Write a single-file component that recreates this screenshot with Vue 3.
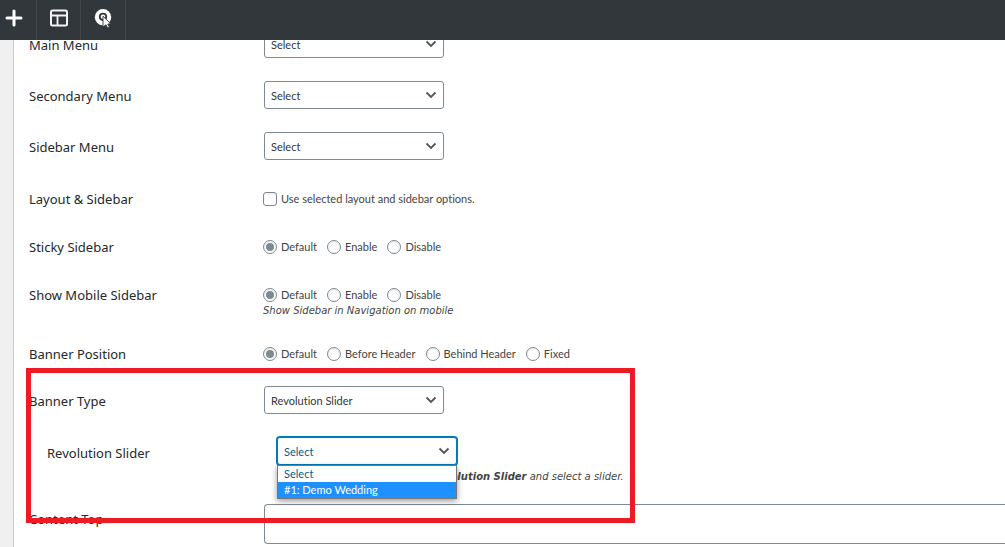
<script setup>
import { ref } from 'vue'

const menus = [
  { id: 'main-menu', label: 'Main Menu' },
  { id: 'secondary-menu', label: 'Secondary Menu' },
  { id: 'sidebar-menu', label: 'Sidebar Menu' },
]
const groups = [
  { id: 'sticky-sidebar', label: 'Sticky Sidebar', options: ['Default', 'Enable', 'Disable'] },
  {
    id: 'mobile-sidebar',
    label: 'Show Mobile Sidebar',
    options: ['Default', 'Enable', 'Disable'],
    hint: 'Show Sidebar in Navigation on mobile',
  },
  {
    id: 'banner-position',
    label: 'Banner Position',
    options: ['Default', 'Before Header', 'Behind Header', 'Fixed'],
  },
]
const chosen = ref({
  'sticky-sidebar': 'Default',
  'mobile-sidebar': 'Default',
  'banner-position': 'Default',
})
const useLayout = ref(false)
const contentTop = ref('')
</script>

<template>
  <div class="page">
    <header class="toolbar">
      <button type="button" class="tool first" aria-label="Add">
        <svg width="18" height="18" viewBox="0 0 18 18"><path d="M9 2v14M2 9h14" stroke="#fff" stroke-width="3" stroke-linecap="round" /></svg>
      </button>
      <button type="button" class="tool" aria-label="Layout">
        <svg width="18" height="18" viewBox="0 0 18 18" fill="none" stroke="#f4f4f4" stroke-width="2"><rect x="1" y="1.5" width="16" height="15" rx="1.5" /><path d="M1 6.5h16M7.5 6.5v10" stroke-width="1.8" /></svg>
      </button>
      <button type="button" class="tool last" aria-label="Select target">
        <svg width="20" height="20" viewBox="0 0 20 20"><circle cx="10" cy="9.2" r="8.2" fill="#fff" /><circle cx="10" cy="8.8" r="3.2" fill="#fff" stroke="#32373c" stroke-width="1.8" /><path d="M10 8.2l7.8 7.6-3 .2 1.7 3.2-1.9.8-1.7-3.3-2.9 2.3z" fill="#fff" stroke="#32373c" stroke-width="0.9" /></svg>
      </button>
    </header>

    <main class="panel">
      <div v-for="menu in menus" :key="menu.id" class="row">
        <label class="name" :for="menu.id">{{ menu.label }}</label>
        <div class="field">
          <div class="picker">
            <select :id="menu.id"><option>Select</option></select>
            <svg class="chevron" width="12" height="8" viewBox="0 0 12 8"><path d="M1.5 1.5L6 6l4.5-4.5" /></svg>
          </div>
        </div>
      </div>

      <div class="row options">
        <span class="name">Layout &amp; Sidebar</span>
        <div class="field choices">
          <label class="choice"><input v-model="useLayout" type="checkbox" />Use selected layout and sidebar options.</label>
        </div>
      </div>

      <div v-for="group in groups" :key="group.id" class="row options" role="radiogroup" :aria-labelledby="group.id">
        <span :id="group.id" class="name">{{ group.label }}</span>
        <div class="field">
          <div class="choices">
            <label v-for="option in group.options" :key="option" class="choice">
              <input v-model="chosen[group.id]" type="radio" :name="group.id" :value="option" />{{ option }}
            </label>
          </div>
          <p v-if="group.hint" class="hint">{{ group.hint }}</p>
        </div>
      </div>

      <section class="banner">
        <div class="row">
          <label class="name" for="banner-type">Banner Type</label>
          <div class="field">
            <div class="picker">
              <select id="banner-type"><option>Revolution Slider</option></select>
              <svg class="chevron" width="12" height="8" viewBox="0 0 12 8"><path d="M1.5 1.5L6 6l4.5-4.5" /></svg>
            </div>
          </div>
        </div>
        <div class="row nested">
          <label class="name" for="slider">Revolution Slider</label>
          <div class="field">
            <div class="picker open">
              <select id="slider"><option>Select</option><option>#1: Demo Wedding</option></select>
              <svg class="chevron" width="12" height="8" viewBox="0 0 12 8"><path d="M1.5 1.5L6 6l4.5-4.5" /></svg>
              <ul class="list" role="listbox" aria-label="Revolution Slider">
                <li role="option">Select</li>
                <li role="option" class="active" aria-selected="true">#1: Demo Wedding</li>
              </ul>
            </div>
            <p class="hint"><strong>Revolution Slider</strong> and select a slider.</p>
          </div>
        </div>
        <div class="highlight"></div>
      </section>

      <div class="row">
        <label class="name" for="content-top">Content Top</label>
        <div class="field">
          <textarea id="content-top" v-model="contentTop" class="content"></textarea>
        </div>
      </div>
    </main>
  </div>
</template>

<style>
body {
  background: #fff;
  overflow: hidden;
}
</style>

<style scoped>
.page {
  height: 100vh;
  display: flex;
  flex-direction: column;
  overflow: hidden;
  background: #f0f0f0;
  color: #444;
  font: 11px/16px Lato, "Noto Sans", sans-serif;
  font-variant-ligatures: none;
}
.toolbar {
  position: relative;
  z-index: 2;
  flex: none;
  display: flex;
  height: 40px;
  background: #32373c;
}
.tool {
  width: 44px;
  padding: 0 0 4px;
  border: 0;
  border-right: 1px solid #41464b;
  background: none;
  display: flex;
  align-items: center;
  justify-content: center;
}
.tool.first {
  width: 37px;
  padding-right: 8px;
}
.tool.last {
  width: 45px;
}
.panel {
  flex: 1;
  margin: -22px 0 0 13px;
  padding-left: 15px;
  border-left: 1px solid #ccc;
  background: #fff;
}
.row {
  display: grid;
  grid-template-columns: 234px minmax(0, 1fr);
  padding: 12px 0 11px;
}
.name {
  padding-top: 6px;
  color: #23282d;
  font: 13px/18px "Noto Sans", "Open Sans", sans-serif;
}
.options {
  padding: 20px 0 12px;
}
.options .name {
  padding-top: 0;
  line-height: 16px;
}
.picker {
  position: relative;
  width: 180px;
  height: 28px;
  margin-left: 1px;
}
select {
  appearance: none;
  display: block;
  width: 100%;
  height: 28px;
  margin: 0;
  padding: 2px 24px 0 6px;
  border: 1px solid #7e8993;
  border-radius: 3px;
  background: #fff;
  color: #32373c;
  font: inherit;
  font-variant-ligatures: none;
}
.chevron {
  position: absolute;
  top: 10px;
  right: 7px;
  fill: none;
  stroke: #555;
  stroke-width: 1.8;
  pointer-events: none;
}
.choices {
  display: flex;
  gap: 10px;
}
.choice {
  display: flex;
  align-items: center;
  gap: 4px;
  height: 16px;
}
input {
  appearance: none;
  box-sizing: border-box;
  width: 14px;
  height: 14px;
  margin: 0;
  border: 1px solid #7e8993;
  border-radius: 3px;
  background: #fff;
  box-shadow: inset 0 1px 2px rgba(0, 0, 0, 0.1);
}
input[type="radio"] {
  display: grid;
  place-items: center;
  border-radius: 50%;
}
input[type="radio"]:checked::before {
  content: "";
  width: 8px;
  height: 8px;
  border-radius: 50%;
  background: #7e8993;
}
.hint {
  margin: 0;
  font: italic 10px/14px "DejaVu Sans", sans-serif;
}
.options .hint {
  margin: 1px 0 -4px;
}
.banner {
  position: relative;
}
.nested {
  padding-bottom: 8px;
}
.nested .name {
  padding-left: 18px;
  padding-top: 7px;
}
.nested .hint {
  padding: 5px 0 0 167px;
}
.open {
  margin-left: 14px;
}
.open select {
  border-color: #007cba;
  box-shadow: 0 0 0 1px #007cba;
  color: #016087;
}
.list {
  position: absolute;
  z-index: 1;
  top: 28px;
  left: 0;
  right: 0;
  margin: 0;
  padding: 0;
  border: 1px solid #777;
  background: #fff;
  color: #016087;
  list-style: none;
  box-shadow: 0 2px 6px rgba(0, 0, 0, 0.4);
}
.list li {
  padding-left: 6px;
}
.list .active {
  background: #1e90ff;
  color: #fff;
}
.highlight {
  position: absolute;
  z-index: 2;
  top: -6px;
  left: -3px;
  width: 599px;
  height: 145px;
  border: 5px solid #ed1c24;
  pointer-events: none;
}
.content {
  display: block;
  box-sizing: border-box;
  width: calc(100% - 1px);
  height: 40px;
  margin-left: 1px;
  border: 1px solid #7e8993;
  border-right: 0;
  border-radius: 4px 0 0 4px;
  background: transparent;
  resize: none;
}
</style>
